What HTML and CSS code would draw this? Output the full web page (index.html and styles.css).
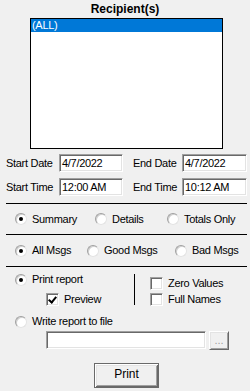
FILE: index.html
```html
<!DOCTYPE html>
<html lang="en">
<head>
  <meta charset="UTF-8">
  <title>Report</title>
  <link rel="stylesheet" href="styles.css">
</head>
<body>
  <div class="panel">
    <div class="title">Recipient(s)</div>
    <div class="list">
      <div class="item sel">(ALL)</div>
    </div>

    <div class="range">
      <div class="field-row">
        <span class="lbl lbl-start">Start Date</span>
        <div class="box box-start">4/7/2022</div>
        <span class="lbl lbl-end">End Date</span>
        <div class="box box-end">4/7/2022</div>
      </div>
      <div class="field-row">
        <span class="lbl lbl-start">Start Time</span>
        <div class="box box-start">12:00 AM</div>
        <span class="lbl lbl-end">End Time</span>
        <div class="box box-end">10:12 AM</div>
      </div>
    </div>

    <div class="sep"></div>
    <div class="opt-row row-a">
      <div class="opt w80"><span class="radio on"></span>Summary</div>
      <div class="opt w72"><span class="radio"></span>Details</div>
      <div class="opt"><span class="radio"></span>Totals Only</div>
    </div>
    <div class="sep"></div>
    <div class="opt-row row-b">
      <div class="opt w72"><span class="radio on"></span>All Msgs</div>
      <div class="opt w88"><span class="radio"></span>Good Msgs</div>
      <div class="opt"><span class="radio"></span>Bad Msgs</div>
    </div>
    <div class="sep"></div>

    <div class="output">
      <div class="out-left">
        <div class="opt"><span class="radio on"></span>Print report</div>
        <div class="opt sub"><span class="check on"></span>Preview</div>
      </div>
      <div class="vline"></div>
      <div class="out-right">
        <div class="opt"><span class="check"></span>Zero Values</div>
        <div class="opt gap3"><span class="check"></span>Full Names</div>
      </div>
    </div>

    <div class="opt write"><span class="radio"></span>Write report to file</div>
    <div class="file-row">
      <div class="box file-box"></div>
      <div class="btn dots">...</div>
    </div>

    <div class="btn-row">
      <div class="btn print">Print</div>
    </div>
  </div>
</body>
</html>
```

FILE: styles.css
```css
* {
  margin: 0;
  padding: 0;
  box-sizing: border-box;
}

html,
body {
  width: 100%;
  height: 100%;
  overflow: hidden;
  background-color: #f0f0f0;
}

body {
  font-family: "Liberation Sans", Arial, sans-serif;
  font-size: 11px;
  letter-spacing: -0.3px;
  color: #000;
}

.panel {
  width: 250px;
}

.title {
  height: 18px;
  padding-top: 2px;
  text-align: center;
  font-weight: bold;
  font-size: 12px;
  line-height: 14px;
  letter-spacing: 0;
}

.list {
  margin-left: 30px;
  width: 193px;
  height: 131px;
  border: 1px solid #000;
  background-color: #fff;
}

.list .item {
  height: 13px;
  line-height: 13px;
  padding-left: 1px;
}

.list .item.sel {
  background-color: #0078d7;
  color: #fff;
}

/* date / time */
.range {
  margin-top: 5px;
  display: flex;
  flex-direction: column;
  gap: 6px;
}

.field-row {
  display: flex;
  align-items: center;
  height: 18px;
}

.lbl {
  line-height: 18px;
}

.lbl-start {
  margin-left: 6px;
  width: 53px;
}

.lbl-end {
  margin-left: 10px;
  width: 49px;
}

.box {
  height: 18px;
  line-height: 16px;
  padding-left: 2px;
  background-color: #fff;
  border: 1px solid;
  border-color: #a0a0a0 #fff #fff #a0a0a0;
  box-shadow: inset 1px 1px #696969, inset -1px -1px #e3e3e3;
}

.box-start {
  width: 64px;
}

.box-end {
  width: 65px;
}

.sep {
  margin-left: 6px;
  width: 241px;
  height: 1px;
  background-color: #000;
}

.range + .sep {
  margin-top: 7px;
}

/* radio rows */
.opt-row {
  display: flex;
  align-items: center;
  padding-left: 15px;
}

.row-a {
  height: 30px;
}

.row-b {
  height: 31px;
}

.w72 {
  width: 72px;
}

.w80 {
  width: 80px;
}

.w88 {
  width: 88px;
}

.opt {
  display: flex;
  align-items: center;
  line-height: 13px;
  white-space: nowrap;
}

.radio {
  position: relative;
  flex: none;
  width: 12px;
  height: 12px;
  margin-right: 5px;
  border-radius: 50%;
  background-color: #fff;
  border: 1px solid;
  border-color: #a0a0a0 #e3e3e3 #e3e3e3 #a0a0a0;
  box-shadow: inset 1px 1px #d0d0d0;
}

.radio.on::after {
  content: "";
  position: absolute;
  left: 3px;
  top: 3px;
  width: 4px;
  height: 4px;
  border-radius: 50%;
  background-color: #000;
}

.check {
  position: relative;
  flex: none;
  width: 13px;
  height: 13px;
  margin-right: 5px;
  background-color: #fff;
  border: 1px solid;
  border-color: #a0a0a0 #fff #fff #a0a0a0;
  box-shadow: inset 1px 1px #696969, inset -1px -1px #e3e3e3;
}

.check.on::after {
  content: "";
  position: absolute;
  left: 3px;
  top: 1px;
  width: 3px;
  height: 6px;
  border: solid #000;
  border-width: 0 2px 2px 0;
  transform: rotate(40deg);
}

/* output section */
.output {
  display: flex;
  align-items: flex-start;
  height: 39px;
}

.out-left {
  width: 134px;
  padding-left: 15px;
  padding-top: 6px;
}

.out-left .sub {
  margin-top: 7px;
  padding-left: 31px;
}

.vline {
  margin-top: 7px;
  width: 1px;
  height: 31px;
  background-color: #000;
}

.out-right {
  padding-left: 15px;
  padding-top: 10px;
}

.gap3 {
  margin-top: 3px;
}

.write {
  margin-top: 9px;
  padding-left: 15px;
}

.file-row {
  display: flex;
  margin-top: 3px;
  padding-left: 46px;
}

.file-box {
  width: 160px;
}

.btn {
  text-align: center;
  background-color: #f0f0f0;
  border: 1px solid;
  border-color: #fff #696969 #696969 #fff;
  box-shadow: inset 1px 1px #e3e3e3, inset -1px -1px #a0a0a0;
}

.dots {
  margin-left: 3px;
  width: 20px;
  height: 19px;
  line-height: 17px;
  color: #a0a0a0;
  letter-spacing: 0;
}

.btn-row {
  margin-top: 13px;
  padding-left: 94px;
}

.print {
  width: 65px;
  height: 25px;
  line-height: 21px;
  font-size: 12px;
  letter-spacing: 0;
  border-color: #696969;
  box-shadow: inset 1px 1px #fff, inset -1px -1px #696969, inset 2px 2px #e3e3e3, inset -2px -2px #a0a0a0;
}
```
